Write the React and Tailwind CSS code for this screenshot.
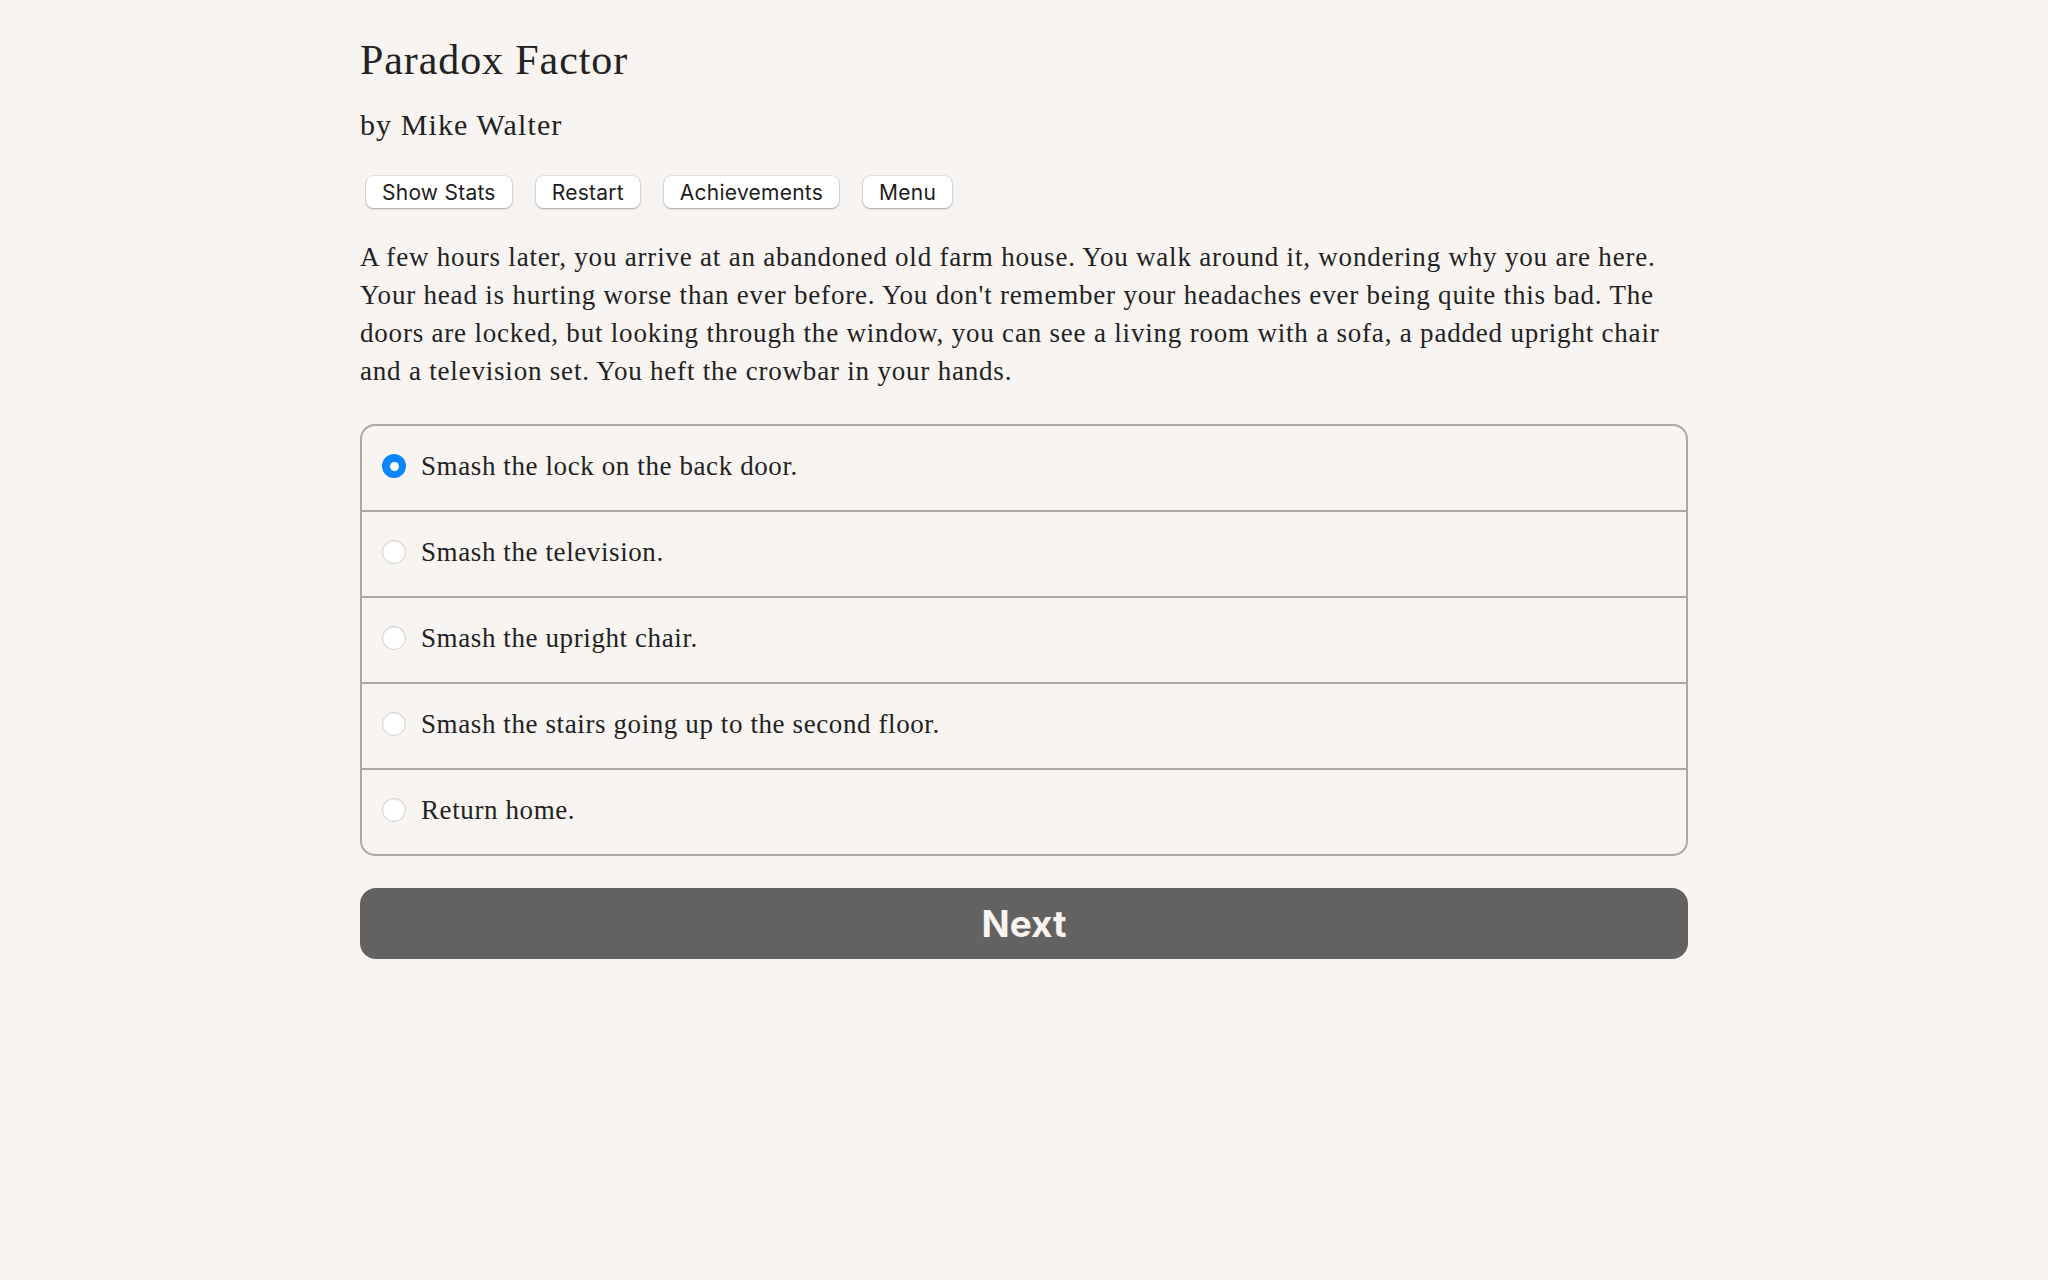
import { useState } from "react";

const options = [
  "Smash the lock on the back door.",
  "Smash the television.",
  "Smash the upright chair.",
  "Smash the stairs going up to the second floor.",
  "Return home.",
];

const navButtons = ["Show Stats", "Restart", "Achievements", "Menu"];

const serif = { fontFamily: '"Liberation Serif", "Times New Roman", serif' };

export default function App() {
  const [choice, setChoice] = useState(0);

  return (
    <div className="min-h-screen bg-[#f7f4f1] text-[#222222]" style={serif}>
      <div className="w-[1328px] mx-auto pt-[35px] pb-20">
        <h1 className="text-[42px] leading-[1.2] tracking-[0.9px]">Paradox Factor</h1>
        <h2 className="mt-[22px] text-[30px] leading-[1.2] tracking-[1.1px]">by Mike Walter</h2>

        <div className="mt-[33px] ml-[6px] flex gap-[24px] font-['Inter',sans-serif]">
          {navButtons.map((label) => (
            <button
              key={label}
              className="h-[32px] px-[16px] rounded-[7px] bg-white text-[21px] tracking-[0.25px] text-[#1d1d1d] shadow-[0_0_0_0.5px_rgba(0,0,0,0.14),0_1px_2px_rgba(0,0,0,0.28)]"
            >
              {label}
            </button>
          ))}
        </div>

        <p className="mt-[30px] text-[27px] leading-[38px] tracking-[0.8px]">
          A few hours later, you arrive at an abandoned old farm house. You walk around it, wondering why you are here.
          Your head is hurting worse than ever before. You don't remember your headaches ever being quite this bad. The
          doors are locked, but looking through the window, you can see a living room with a sofa, a padded upright chair
          and a television set. You heft the crowbar in your hands.
        </p>

        <div className="mt-[34px] border-2 border-[#a9a9a9] rounded-[15px] overflow-hidden">
          {options.map((text, i) => (
            <label
              key={text}
              onClick={() => setChoice(i)}
              className={`flex items-center h-[84px] pb-[4px] pl-[20px] cursor-pointer ${i > 0 ? "border-t-2 border-[#a9a9a9] h-[86px]" : ""}`}
            >
              {choice === i ? (
                <span className="w-[24px] h-[24px] rounded-full bg-[#0a84ff] flex items-center justify-center shrink-0">
                  <span className="w-[9px] h-[9px] rounded-full bg-white" />
                </span>
              ) : (
                <span className="w-[24px] h-[24px] rounded-full bg-white border border-[#cfcfcf] shadow-[inset_0_1px_1px_rgba(0,0,0,0.06)] shrink-0" />
              )}
              <span className="ml-[15px] text-[27px] tracking-[0.6px]">{text}</span>
            </label>
          ))}
        </div>

        <button className="mt-[32px] w-full h-[71px] rounded-[16px] bg-[#636260] text-[#f7f4f1] font-['Inter',sans-serif] font-bold text-[37px]">
          Next
        </button>
      </div>
    </div>
  );
}
